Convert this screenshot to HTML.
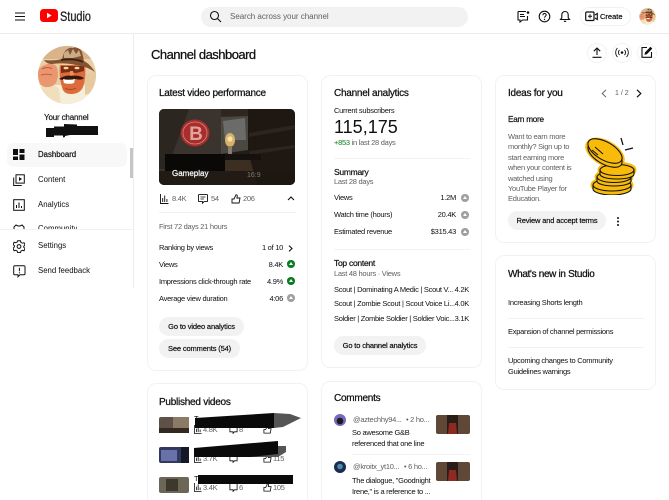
<!DOCTYPE html>
<html><head><meta charset="utf-8"><style>
html,body{margin:0;padding:0;background:#fff}
#p{position:relative;width:669px;height:500px;overflow:hidden;background:#fff;font-family:"Liberation Sans",sans-serif;color:#0f0f0f}
#p div,#p svg{position:absolute}
.t{white-space:nowrap;font-size:7.5px;line-height:10px;letter-spacing:-.27px}
.g{color:#606060}
.h{font-size:10px;line-height:12px;letter-spacing:-.25px;-webkit-text-stroke:.25px #0f0f0f}
.b{-webkit-text-stroke:.2px #0f0f0f}
.n{letter-spacing:0}
.c{background:#fff;border:1px solid #f2f2f2;border-radius:9px;box-sizing:border-box}
.btn{background:#f2f2f2;border-radius:10px;height:19px;font-size:7.5px;line-height:19px;letter-spacing:-.14px;text-align:center;white-space:nowrap;-webkit-text-stroke:.2px #0f0f0f}
.l{height:1px;background:#f2f2f2}
.dot{width:7.5px;height:7.5px;border-radius:50%;background:#a0a0a0}
.dot.gr{background:#0a7d1e}
.dot:after{content:"";position:absolute;left:1.7px;top:1.600px;border-left:2px solid transparent;border-right:2px solid transparent;border-bottom:3.500px solid #fff}
.s{fill:none;stroke:#0f0f0f;stroke-width:1.6}
</style></head><body><div id="p">

<svg width="0" height="0" style="left:0;top:0"><defs>
<clipPath id="cc"><circle cx="30" cy="30" r="29"/></clipPath>
<g id="av"><g clip-path="url(#cc)">
<rect width="60" height="60" fill="#e9cfa8"/>
<rect y="0" width="60" height="14" fill="#d9b48a"/>
<path d="M0 40L60 40V60H0z" fill="#f5eed8"/>
<path d="M4 42c4-3 14-4 18 2l2 16H4z" fill="#f0dfbc"/>
<path d="M48 30l12-4v20l-12 4z" fill="#e7c9a0"/>
<path d="M1 26c2-6 12-9 17-6 4 3 4 14 0 19-4 4-11 4-14 1-2-3-4-9-3-14z" fill="#ea9770"/>
<path d="M5 24c3-2 8-2 10 0M4 30c3-1 8-1 11 0" fill="none" stroke="#c4593a" stroke-width="1"/>
<path d="M23 20h25c1 8 0 19-3 24-3 4-7 5-11 5-5 0-8-2-9-7-2-6-3-15-2-22z" fill="#dc6c3c"/>
<path d="M24 21h23v5l-8 2-7-1-8 1z" fill="#7a2e14"/>
<ellipse cx="29" cy="23" rx="2.500" ry="1.300" fill="#f7d8a0"/><ellipse cx="40" cy="23" rx="2.500" ry="1.300" fill="#f7d8a0"/>
<path d="M33 26l3 0 1 4-4 0z" fill="#e8935f"/>
<path d="M22 34c4-3 9-4 12-3 5-1 10 0 13 2-2 2-5 2-8 1-5 1-12 2-17 0z" fill="#3a170b"/>
<path d="M26 34c4 1 8 1 12 0l-1 4c-3 1-7 1-10 0z" fill="#fff"/>
<path d="M28 43c3 2 8 2 11 0" fill="none" stroke="#a9451f" stroke-width="1"/>
<path d="M7 15c8 1 14 0 18-1l2-6c2-4 6-6 9-5 4-2 7 0 9 4l2 9c4 2 8 6 11 11-6-4-12-6-19-7-8-2-17-2-24-1-3 0-6-1-8-4z" fill="#835332"/>
<path d="M27 8l4-3 2 5 3-6 3 5 3-4 2 6-8 2-9 0z" fill="#c9ad86"/>
<path d="M24 15c7-1 16-1 22 2" fill="none" stroke="#3d2212" stroke-width="1.800"/>
</g></g></defs></svg>

<!-- header -->
<svg style="left:14px;top:11px" width="12" height="11" viewBox="0 0 12 11"><path d="M1 2h10M1 5.500h10M1 9h10" stroke="#0f0f0f" stroke-width="1.100"/></svg>
<svg style="left:40px;top:9px" width="18" height="13" viewBox="0 0 18 13"><rect width="18" height="13" rx="3.500" fill="#f00"/><path d="M7 3.800v5.400l4.600-2.700z" fill="#fff"/></svg>
<div class="t n" style="left:60px;top:8px;font-size:14px;line-height:16px;transform:scaleX(.78);transform-origin:0 0;-webkit-text-stroke:.3px #222;color:#222">Studio</div>
<div style="left:201px;top:7px;width:267px;height:20px;border-radius:10px;background:#f2f2f2"></div>
<svg style="left:209px;top:10px" width="13" height="13" viewBox="0 0 13 13"><circle cx="5.500" cy="5.500" r="4" fill="none" stroke="#0f0f0f" stroke-width="1.100"/><path d="M8.500 8.500l3.500 3.500" stroke="#0f0f0f" stroke-width="1.100"/></svg>
<div class="t g n" style="left:230px;top:12px;font-size:8px;letter-spacing:-.02px">Search across your channel</div>
<svg style="left:517px;top:10px" width="13" height="13" viewBox="0 0 13 13"><path d="M1 1.500h8M1 1.500v8.500h2v2l2.500-2h5V6" class="s" style="stroke-width:1.100"/><path d="M3 4.500h4M3 6.500h5" stroke="#0f0f0f" stroke-width="1"/><circle cx="11" cy="2.500" r="1.300" fill="#0f0f0f"/></svg>
<svg style="left:538px;top:10px" width="13" height="13" viewBox="0 0 13 13"><circle cx="6.500" cy="6.500" r="5.300" fill="none" stroke="#0f0f0f" stroke-width="1.100"/><path d="M4.900 5.200c0-2.200 3.300-2.200 3.300-.2 0 1.300-1.600 1.300-1.600 2.700" fill="none" stroke="#0f0f0f" stroke-width="1"/><circle cx="6.500" cy="9.400" r=".7" fill="#0f0f0f"/></svg>
<svg style="left:559px;top:10px" width="12" height="13" viewBox="0 0 12 13"><path d="M1.500 9.500h9l-1.300-1.700V5C9.200 3 8 1.500 6 1.500S2.800 3 2.800 5v2.800zM4.800 11.300h2.400" fill="none" stroke="#0f0f0f" stroke-width="1.100"/></svg>
<div style="left:580px;top:7px;width:51px;height:19px;border:1px solid #f2f2f2;border-radius:10px;box-sizing:border-box"></div>
<svg style="left:585px;top:11px" width="13" height="11" viewBox="0 0 13 11"><rect x=".7" y="1" width="8.300" height="8.500" rx="1" fill="none" stroke="#0f0f0f" stroke-width="1.200"/><path d="M3 5.200h4M5 3.200v4" stroke="#0f0f0f" stroke-width="1"/><path d="M10 4l2.300-1.500v6L10 7" fill="none" stroke="#0f0f0f" stroke-width="1.100"/></svg>
<div class="t b n" style="left:600px;top:12px;font-size:7.5px">Create</div>
<svg style="left:639px;top:8px" width="17" height="17" viewBox="0 0 60 60"><use href="#av"/></svg>
<div style="left:0;top:33px;width:669px;height:1px;background:#ececec"></div>

<!-- sidebar -->
<div style="left:133px;top:34px;width:1px;height:254px;background:#ececec"></div>
<svg style="left:37px;top:45px" width="60" height="60" viewBox="0 0 60 60"><use href="#av"/></svg>
<div class="t" style="left:44px;top:113px;font-size:8px;letter-spacing:-.16px;-webkit-text-stroke:.15px #0f0f0f">Your channel</div>
<svg style="left:46px;top:121px" width="53" height="17" viewBox="0 0 53 17"><path d="M0 7h8V5.500h10V3l13 .5V5h21v9H24l-5 1v1l-2 .5v-2H8v1.500H0z" fill="#111"/></svg>
<div style="left:7px;top:143px;width:120px;height:24px;border-radius:7px;background:#f8f8f8"></div>
<div style="left:130px;top:148px;width:2.500px;height:30px;background:#c6c6c6"></div>
<svg style="left:13px;top:149px" width="12" height="11" viewBox="0 0 12 11"><path d="M0 0h5v6H0zM6.500 0H11.500v4h-5zM6.500 5.500h5V11h-5zM0 7.500h5V11H0z" fill="#0f0f0f"/></svg>
<div class="t b n" style="left:38px;top:150px;font-size:7.800px">Dashboard</div>
<svg style="left:13px;top:174px" width="12" height="12" viewBox="0 0 12 12"><path d="M.7 3.500v8h8" class="s" style="stroke-width:1"/><rect x="3" y=".8" width="8.300" height="8.300" fill="none" stroke="#0f0f0f" stroke-width="1"/><path d="M6 3v4l3-2z" fill="#0f0f0f"/></svg>
<div class="t n" style="left:38px;top:175px;font-size:7.800px">Content</div>
<svg style="left:13px;top:199px" width="12" height="12" viewBox="0 0 12 12"><rect x=".7" y=".7" width="10.600" height="10.600" fill="none" stroke="#0f0f0f" stroke-width="1"/><path d="M3.500 9V6M6 9V3.500M8.500 9V7" stroke="#0f0f0f" stroke-width="1"/></svg>
<div class="t n" style="left:38px;top:200px;font-size:7.800px">Analytics</div>
<div class="t n" style="left:38px;top:224px;font-size:7.800px;height:4.500px;overflow:hidden">Community</div>
<svg style="left:13px;top:224px" width="12" height="5" viewBox="0 0 12 5"><path d="M1 5V3l2-2 2 1 2 0 2-1 2 2v2" class="s" style="stroke-width:1"/></svg>
<div style="left:0;top:229px;width:133px;height:1px;background:#f2f2f2"></div>
<svg style="left:13px;top:240px" width="12" height="13" viewBox="0 0 12 13"><path d="M4.500 1h3l.4 1.700 1.600.8 1.700-.5 1 2.500-1.300 1.100v1.200l1.300 1.100-1 2.500-1.700-.5-1.600.8-.4 1.700h-3l-.4-1.700-1.600-.8-1.700.5-1-2.500L1.100 7.300V6.100L-.2 5l1-2.500 1.700.5 1.600-.8z" transform="translate(.3 -.2) scale(.96)" fill="none" stroke="#0f0f0f" stroke-width="1"/><circle cx="6" cy="6.500" r="1.900" fill="none" stroke="#0f0f0f" stroke-width="1"/></svg>
<div class="t n" style="left:38px;top:241px;font-size:7.800px">Settings</div>
<svg style="left:13px;top:265px" width="13" height="13" viewBox="0 0 13 13"><path d="M1.700.8h9.300a1 1 0 0 1 1 1v7a1 1 0 0 1-1 1H7l-2 2v-2H1.700a1 1 0 0 1-1-1v-7a1 1 0 0 1 1-1z" fill="none" stroke="#0f0f0f" stroke-width="1"/><path d="M6.400 2.800v3.500M6.400 7.200v1.200" stroke="#0f0f0f" stroke-width="1"/></svg>
<div class="t n" style="left:38px;top:266px;font-size:7.800px">Send feedback</div>

<!-- top right -->
<div class="t" style="left:151px;top:47px;font-size:13px;line-height:16px;letter-spacing:-.52px;-webkit-text-stroke:.25px #0f0f0f">Channel dashboard</div>
<div style="left:587px;top:43px;width:20px;height:20px;border:1px solid #f2f2f2;border-radius:50%;box-sizing:border-box"></div>
<div style="left:612px;top:43px;width:20px;height:20px;border:1px solid #f2f2f2;border-radius:50%;box-sizing:border-box"></div>
<div style="left:637px;top:43px;width:20px;height:20px;border:1px solid #f2f2f2;border-radius:50%;box-sizing:border-box"></div>
<svg style="left:592px;top:47px" width="10" height="11" viewBox="0 0 10 11"><path d="M5 8V1M1.800 4.200L5 1l3.200 3.200M.5 10.300h9" fill="none" stroke="#0f0f0f" stroke-width="1.100"/></svg>
<svg style="left:615px;top:47px" width="14" height="11" viewBox="0 0 14 11"><circle cx="7" cy="5.500" r="1.300" fill="#0f0f0f"/><path d="M4.500 3a3.500 3.500 0 0 0 0 5M9.500 3a3.500 3.500 0 0 1 0 5M2.500 1a6.500 6.500 0 0 0 0 9M11.500 1a6.500 6.500 0 0 1 0 9" fill="none" stroke="#0f0f0f" stroke-width=".9"/></svg>
<svg style="left:641px;top:46px" width="12" height="12" viewBox="0 0 12 12"><path d="M6 1.500H1v9.800h9.500V6" fill="none" stroke="#0f0f0f" stroke-width="1.100"/><path d="M3.500 8.700l.5-2.300L9.500.8l1.800 1.800L5.800 8.200z" fill="#0f0f0f"/></svg>

<!-- card 1 -->
<div class="c" style="left:147px;top:75px;width:161px;height:296px"></div>
<div class="t h" style="left:159px;top:88px">Latest video performance</div>
<svg style="left:159px;top:109px" width="136" height="76" viewBox="0 0 136 76"><defs><clipPath id="th"><rect width="136" height="76" rx="5"/></clipPath></defs><g clip-path="url(#th)"><rect width="136" height="76" fill="#241c17"/><path d="M0 0h62v76H0z" fill="#3b332d"/><path d="M0 0h30L8 60H0z" fill="#2c2621"/><path d="M62 0h30l-3 8H62z" fill="#2f2620"/><path d="M62 8l27-1v34L62 45z" fill="#4b4841"/><path d="M64 12l22-3 1 22H66z" fill="#6b6c6a"/><path d="M89 0h47v76H89z" fill="#1f1712"/><path d="M90 24l46-8v4l-46 8zM90 42l46-6v3l-46 7z" fill="#2d241d"/><path d="M60 46h30l8 30H56z" fill="#3c2f22"/><ellipse cx="36" cy="24" rx="14.500" ry="13.500" fill="#a92d2a"/><ellipse cx="36" cy="24" rx="12" ry="11" fill="none" stroke="#c98c85" stroke-width=".8"/><text x="37" y="31" text-anchor="middle" font-family="Liberation Sans" font-weight="700" font-size="19" fill="#dfa59c">B</text><ellipse cx="71" cy="31" rx="5" ry="7" fill="#d9b06a"/><circle cx="71" cy="30" r="2.600" fill="#f6e4a6"/><rect x="69" y="37" width="4" height="9" fill="#8c7a6c"/><path d="M6 45h60v17H6z" fill="#0b0908"/><path d="M66 45h36v6H66z" fill="#15110e"/><path d="M0 62h136v14H0z" fill="#1d1713" opacity=".85"/></g></svg>
<div class="t n" style="left:172px;top:169px;color:#fff;font-size:8px;-webkit-text-stroke:.2px #fff">Gameplay</div>
<div class="t n" style="left:247px;top:171px;color:#7e7a74;font-size:7px">16:9</div>
<svg style="left:160px;top:194px" width="9" height="10" viewBox="0 0 9 10"><path d="M.5 0v9.500h8M2.700 8V4M4.700 8V1.500M6.900 8V5" fill="none" stroke="#0f0f0f" stroke-width=".9"/></svg>
<div class="t g" style="left:172px;top:194px">8.4K</div>
<svg style="left:198px;top:194px" width="10" height="10" viewBox="0 0 10 10"><path d="M1 .6h8a.5.5 0 0 1 .5.5v6a.5.5 0 0 1-.5.5H6L4.500 9.300V7.600H1a.5.500 0 0 1-.5-.5v-6A.5.500 0 0 1 1 .6z" fill="none" stroke="#0f0f0f" stroke-width=".9"/><path d="M2.500 3h5M2.500 5h3.500" stroke="#0f0f0f" stroke-width=".8"/></svg>
<div class="t g" style="left:211px;top:194px">54</div>
<svg style="left:231px;top:194px" width="10" height="10" viewBox="0 0 10 10"><path d="M1 5h2L5 .8c1-.2 1.500.6 1.200 1.700L5.900 4H9l-.9 5H1z" fill="none" stroke="#0f0f0f" stroke-width=".9"/></svg>
<div class="t g" style="left:243px;top:194px">206</div>
<svg style="left:287px;top:196px" width="8" height="5" viewBox="0 0 8 5"><path d="M1 4l3-3 3 3" fill="none" stroke="#0f0f0f" stroke-width="1.100"/></svg>
<div class="l" style="left:159px;top:212px;width:137px"></div>
<div class="t g" style="left:159px;top:222px">First 72 days 21 hours</div>
<div class="t" style="left:159px;top:243px">Ranking by views</div><div class="t" style="right:386px;top:243px">1 of 10</div>
<svg style="left:288px;top:245px" width="5" height="7" viewBox="0 0 5 7"><path d="M1 .6l3 2.900-3 2.900" fill="none" stroke="#0f0f0f" stroke-width="1.100"/></svg>
<div class="t" style="left:159px;top:260px">Views</div><div class="t" style="right:386px;top:260px">8.4K</div><div class="dot gr" style="left:287px;top:260px"></div>
<div class="t" style="left:159px;top:277px">Impressions click-through rate</div><div class="t" style="right:386px;top:277px">4.9%</div><div class="dot gr" style="left:287px;top:277px"></div>
<div class="t" style="left:159px;top:294px">Average view duration</div><div class="t" style="right:386px;top:294px">4:06</div><div class="dot" style="left:287px;top:294px"></div>
<div class="btn" style="left:159px;top:317px;width:85px">Go to video analytics</div>
<div class="btn" style="left:159px;top:339px;width:81px">See comments (54)</div>

<!-- card published -->
<div class="c" style="left:147px;top:383px;width:161px;height:130px"></div>
<div class="t h" style="left:159px;top:397px">Published videos</div>
<svg style="left:159px;top:417px" width="30" height="16" viewBox="0 0 30 16"><rect width="30" height="16" rx="2" fill="#5e5147"/><rect x="14" width="16" height="16" fill="#8a7a66"/><rect x="0" y="11" width="30" height="5" fill="#33291f"/></svg>
<svg style="left:159px;top:447px" width="30" height="16" viewBox="0 0 30 16"><rect width="30" height="16" rx="2" fill="#30395f"/><rect x="2" y="3" width="16" height="11" fill="#6a70a8"/><rect x="22" width="8" height="16" fill="#141824"/></svg>
<svg style="left:159px;top:477px" width="30" height="16" viewBox="0 0 30 16"><rect width="30" height="16" rx="2" fill="#6c6656"/><rect x="7" y="2" width="12" height="12" fill="#3c382e"/></svg>
<div class="t g" style="left:203px;top:425px">4.8K</div><div class="t g" style="left:239px;top:425px">8</div>
<div class="t g" style="left:203px;top:454px">3.7K</div><div class="t g" style="left:273px;top:454px">115</div>
<div class="t g" style="left:203px;top:483px">3.4K</div><div class="t g" style="left:239px;top:483px">6</div><div class="t g" style="left:273px;top:483px">105</div>
<svg style="left:194px;top:425px" width="8" height="9" viewBox="0 0 9 10"><path d="M.5 0v9.500h8M2.700 8V4M4.700 8V1.500M6.900 8V5" fill="none" stroke="#0f0f0f" stroke-width=".9"/></svg>
<svg style="left:194px;top:454px" width="8" height="9" viewBox="0 0 9 10"><path d="M.5 0v9.500h8M2.700 8V4M4.700 8V1.500M6.900 8V5" fill="none" stroke="#0f0f0f" stroke-width=".9"/></svg>
<svg style="left:194px;top:483px" width="8" height="9" viewBox="0 0 9 10"><path d="M.5 0v9.500h8M2.700 8V4M4.700 8V1.500M6.900 8V5" fill="none" stroke="#0f0f0f" stroke-width=".9"/></svg>
<svg style="left:229px;top:425px" width="9" height="9" viewBox="0 0 10 10"><path d="M1 .6h8v7H6L4.500 9.300V7.600H1z" fill="none" stroke="#0f0f0f" stroke-width=".9"/></svg>
<svg style="left:229px;top:454px" width="9" height="9" viewBox="0 0 10 10"><path d="M1 .6h8v7H6L4.500 9.300V7.600H1z" fill="none" stroke="#0f0f0f" stroke-width=".9"/></svg>
<svg style="left:229px;top:483px" width="9" height="9" viewBox="0 0 10 10"><path d="M1 .6h8v7H6L4.500 9.300V7.600H1z" fill="none" stroke="#0f0f0f" stroke-width=".9"/></svg>
<svg style="left:263px;top:425px" width="9" height="9" viewBox="0 0 10 10"><path d="M1 5h2L5 .8c1-.2 1.500.6 1.200 1.700L5.900 4H9l-.9 5H1z" fill="none" stroke="#0f0f0f" stroke-width=".9"/></svg>
<svg style="left:263px;top:454px" width="9" height="9" viewBox="0 0 10 10"><path d="M1 5h2L5 .8c1-.2 1.500.6 1.200 1.700L5.900 4H9l-.9 5H1z" fill="none" stroke="#0f0f0f" stroke-width=".9"/></svg>
<svg style="left:263px;top:483px" width="9" height="9" viewBox="0 0 10 10"><path d="M1 5h2L5 .8c1-.2 1.500.6 1.200 1.700L5.900 4H9l-.9 5H1z" fill="none" stroke="#0f0f0f" stroke-width=".9"/></svg>
<div class="t n" style="left:194px;top:414px">T</div>
<div class="t n" style="left:194px;top:474px">T</div>
<svg style="left:190px;top:410px" width="115" height="80" viewBox="0 0 115 80"><path d="M84 3L100 4 111 8 93 17 84 18z" fill="#555"/><path d="M5 8L84 3V18H5z" fill="#0a0a0a"/><path d="M40 47H88L96 42V36H40z" fill="#555"/><path d="M4 38L88 31V44L60 47H4z" fill="#0a0a0a"/><rect x="8" y="65" width="95" height="9" fill="#0a0a0a"/></svg>

<!-- card analytics -->
<div class="c" style="left:321px;top:75px;width:161px;height:293px"></div>
<div class="t h" style="left:334px;top:88px">Channel analytics</div>
<div class="t" style="left:334px;top:106px">Current subscribers</div>
<div class="t n" style="left:334px;top:117px;font-size:18px;line-height:20px">115,175</div>
<div class="t g" style="left:334px;top:138px"><span style="color:#0a7d1e">+853</span> in last 28 days</div>
<div class="l" style="left:334px;top:158px;width:136px"></div>
<div class="t b" style="left:334px;top:167px;font-size:8.500px">Summary</div>
<div class="t g" style="left:334px;top:177px">Last 28 days</div>
<div class="t" style="left:334px;top:193px">Views</div><div class="t" style="right:213px;top:193px">1.2M</div><div class="dot" style="left:461px;top:194px"></div>
<div class="t" style="left:334px;top:210px">Watch time (hours)</div><div class="t" style="right:213px;top:210px">20.4K</div><div class="dot" style="left:461px;top:211px"></div>
<div class="t" style="left:334px;top:227px">Estimated revenue</div><div class="t" style="right:213px;top:227px">$315.43</div><div class="dot" style="left:461px;top:228px"></div>
<div class="l" style="left:334px;top:249px;width:136px"></div>
<div class="t b" style="left:334px;top:258px;font-size:8.500px">Top content</div>
<div class="t g" style="left:334px;top:269px">Last 48 hours · Views</div>
<div class="t" style="left:334px;top:285px">Scout | Dominating A Medic | Scout V...</div><div class="t" style="right:200px;top:285px">4.2K</div>
<div class="t" style="left:334px;top:299px">Scout | Zombie Scout | Scout Voice Li...</div><div class="t" style="right:200px;top:299px">4.0K</div>
<div class="t" style="left:334px;top:314px">Soldier | Zombie Soldier | Soldier Voic...</div><div class="t" style="right:200px;top:314px">3.1K</div>
<div class="btn" style="left:334px;top:336px;width:92px">Go to channel analytics</div>

<!-- comments -->
<div class="c" style="left:321px;top:381px;width:161px;height:130px"></div>
<div class="t h" style="left:334px;top:393px">Comments</div>
<svg style="left:334px;top:414px" width="12" height="12"><circle cx="6" cy="6" r="6" fill="#7a68b8"/><circle cx="6" cy="7" r="3.300" fill="#1a1a22"/></svg>
<div class="t g" style="left:353px;top:415px">@aztechhy94...</div><div class="t g" style="left:406px;top:415px">• 2 ho...</div>
<div class="t" style="left:352px;top:427px;line-height:11px">So awesome G&amp;B<br>referenced that one line</div>
<svg style="left:436px;top:415px" width="34" height="19"><rect width="34" height="19" rx="2" fill="#5f4838"/><rect x="11" y="0" width="11" height="19" fill="#2a1c16"/><path d="M13 8h7l1 11h-9z" fill="#8f2a22"/></svg>
<div class="l" style="left:352px;top:454px;width:118px"></div>
<svg style="left:334px;top:461px" width="12" height="12"><circle cx="6" cy="6" r="6" fill="#1a2c52"/><circle cx="6" cy="5.500" r="2.800" fill="#4f8aa6"/></svg>
<div class="t g" style="left:353px;top:462px">@kroitx_yt10...</div><div class="t g" style="left:404px;top:462px">• 6 ho...</div>
<div class="t" style="left:352px;top:475px;line-height:11px">The dialogue, "Goodnight<br>Irene," is a reference to ...</div>
<svg style="left:436px;top:462px" width="34" height="19"><rect width="34" height="19" rx="2" fill="#5f4838"/><rect x="11" y="0" width="11" height="19" fill="#2a1c16"/><path d="M13 8h7l1 11h-9z" fill="#8f2a22"/></svg>

<!-- ideas -->
<div class="c" style="left:495px;top:75px;width:161px;height:168px"></div>
<div class="t h" style="left:508px;top:88px">Ideas for you</div>
<svg style="left:601px;top:89px" width="6" height="9" viewBox="0 0 6 9"><path d="M5 .8L1.200 4.500 5 8.200" fill="none" stroke="#606060" stroke-width="1"/></svg>
<div class="t g n" style="left:615px;top:89px;font-size:7px">1 / 2</div>
<svg style="left:636px;top:89px" width="6" height="9" viewBox="0 0 6 9"><path d="M1 .8l3.800 3.700L1 8.200" fill="none" stroke="#0f0f0f" stroke-width="1.200"/></svg>
<div class="t b" style="left:508px;top:115px;font-size:8.200px">Earn more</div>
<div class="t g" style="left:508px;top:132px;line-height:10.400px">Want to earn more<br>monthly? Sign up to<br>start earning more<br>when your content is<br>watched using<br>YouTube Player for<br>Education.</div>
<svg style="left:585px;top:135px" width="54" height="60" viewBox="0 0 54 60"><g fill="#f9bb0b" stroke="#f9bb0b" stroke-width="5" stroke-linejoin="round"><ellipse cx="27" cy="50" rx="19" ry="6"/><ellipse cx="29" cy="42" rx="17" ry="6"/><ellipse cx="32" cy="35" rx="17" ry="6"/><ellipse cx="20" cy="18" rx="19" ry="10" transform="rotate(30 20 18)"/></g><g fill="#f9bb0b" stroke="#111" stroke-width="1.100"><path d="M8 50v4c0 3 8 6 19 6s19-3 19-6v-4z"/><ellipse cx="27" cy="50" rx="19" ry="6"/><path d="M12 42v4c0 3 8 5 17 5s17-2 17-5v-4z"/><ellipse cx="29" cy="42" rx="17" ry="5.500"/><path d="M15 35v4c0 3 7 5 17 5s17-2 17-5v-4z"/><ellipse cx="32" cy="35" rx="17" ry="5.500"/><ellipse cx="20" cy="20" rx="19" ry="9" transform="rotate(30 20 20)"/><ellipse cx="20" cy="16" rx="19" ry="9" transform="rotate(30 20 16)"/></g><path d="M10 12l8 7M7 15l6 5" stroke="#111" stroke-width="1" fill="none"/><path d="M36 3l2 7M40 15l8-2" fill="none" stroke="#111" stroke-width="1.300"/></svg>
<div class="btn" style="left:508px;top:211px;width:98px">Review and accept terms</div>
<svg style="left:616px;top:217px" width="4" height="9"><circle cx="2" cy="1" r="1" fill="#0f0f0f"/><circle cx="2" cy="4.500" r="1" fill="#0f0f0f"/><circle cx="2" cy="8" r="1" fill="#0f0f0f"/></svg>

<!-- whats new -->
<div class="c" style="left:495px;top:255px;width:161px;height:135px"></div>
<div class="t h" style="left:508px;top:269px;letter-spacing:-.33px">What's new in Studio</div>
<div class="t" style="left:508px;top:298px">Increasing Shorts length</div>
<div class="l" style="left:508px;top:318px;width:136px"></div>
<div class="t" style="left:508px;top:327px">Expansion of channel permissions</div>
<div class="l" style="left:508px;top:347px;width:136px"></div>
<div class="t" style="left:508px;top:356px;line-height:10.500px">Upcoming changes to Community<br>Guidelines warnings</div>
</div></body></html>
